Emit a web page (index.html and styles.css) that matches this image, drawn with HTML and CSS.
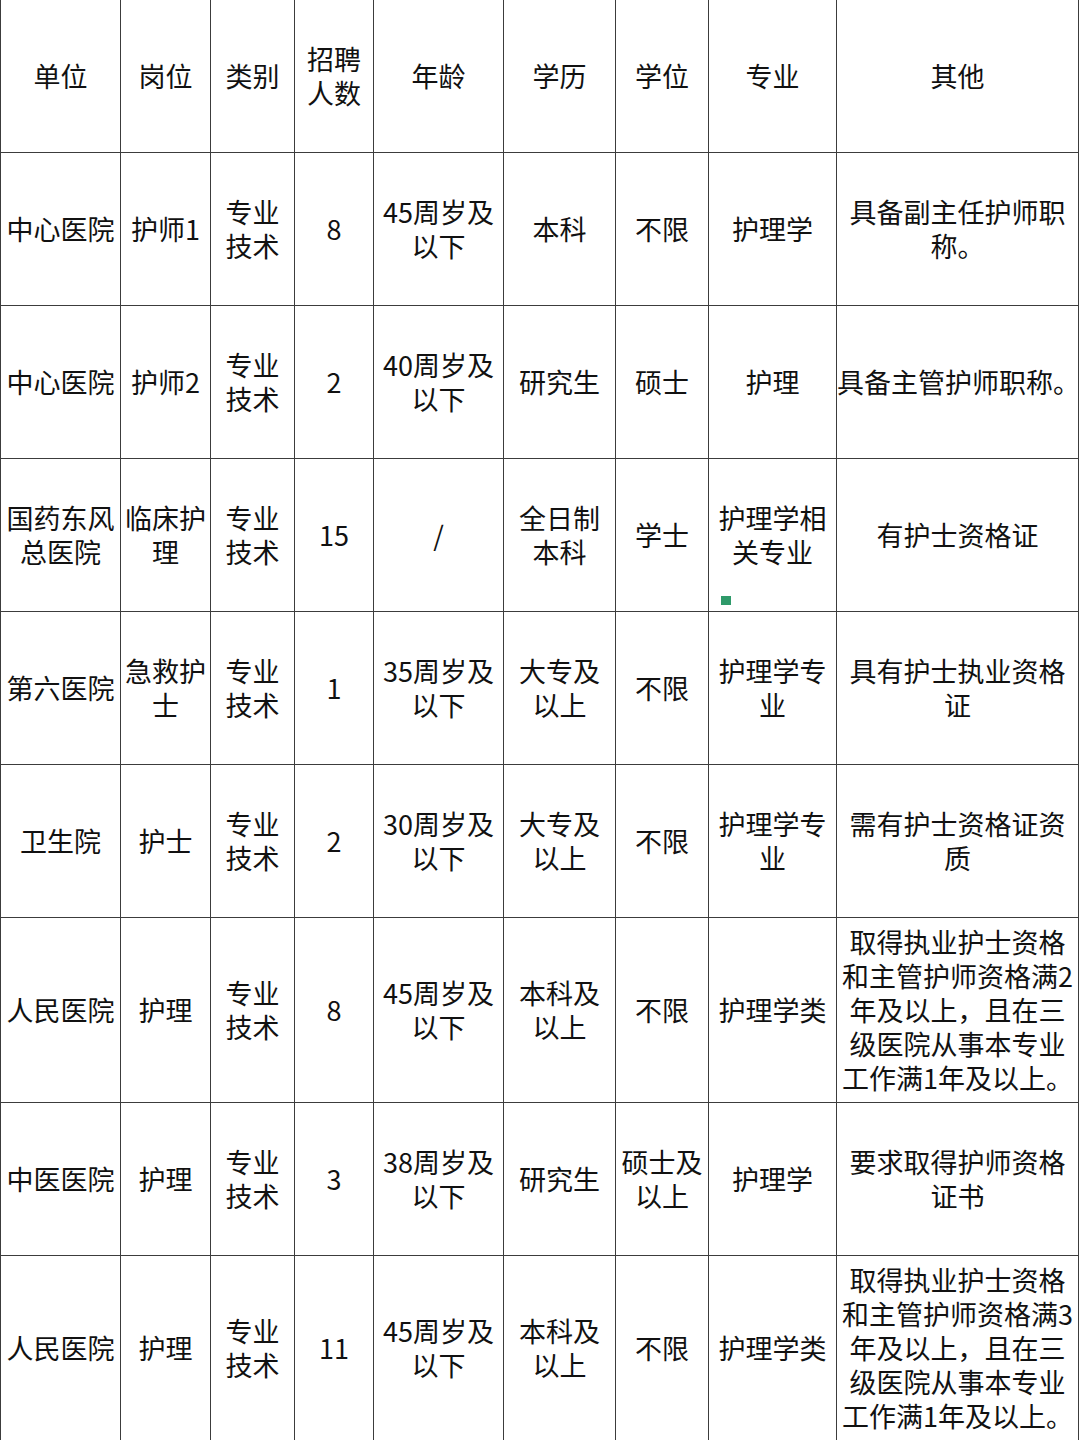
FILE: index.html
```html
<!DOCTYPE html>
<html lang="zh-CN">
<head>
<meta charset="utf-8">
<title>招聘岗位表</title>
<link rel="stylesheet" href="styles.css">
</head>
<body>
<table class="grid">
  <colgroup>
    <col class="c1"><col class="c2"><col class="c3"><col class="c4"><col class="c5"><col class="c6"><col class="c7"><col class="c8"><col class="c9">
  </colgroup>
  <tr class="r-std">
    <td>单位</td><td>岗位</td><td>类别</td><td>招聘<br>人数</td><td>年龄</td><td>学历</td><td>学位</td><td>专业</td><td>其他</td>
  </tr>
  <tr class="r-std">
    <td>中心医院</td><td>护师1</td><td>专业<br>技术</td><td>8</td><td>45周岁及<br>以下</td><td>本科</td><td>不限</td><td>护理学</td><td>具备副主任护师职<br>称。</td>
  </tr>
  <tr class="r-std">
    <td>中心医院</td><td>护师2</td><td>专业<br>技术</td><td>2</td><td>40周岁及<br>以下</td><td>研究生</td><td>硕士</td><td>护理</td><td>具备主管护师职称。</td>
  </tr>
  <tr class="r-std">
    <td>国药东风<br>总医院</td><td>临床护<br>理</td><td>专业<br>技术</td><td>15</td><td>/</td><td>全日制<br>本科</td><td>学士</td><td class="has-mark">护理学相<br>关专业<span class="mark"></span></td><td>有护士资格证</td>
  </tr>
  <tr class="r-std">
    <td>第六医院</td><td>急救护<br>士</td><td>专业<br>技术</td><td>1</td><td>35周岁及<br>以下</td><td>大专及<br>以上</td><td>不限</td><td>护理学专<br>业</td><td>具有护士执业资格<br>证</td>
  </tr>
  <tr class="r-std">
    <td>卫生院</td><td>护士</td><td>专业<br>技术</td><td>2</td><td>30周岁及<br>以下</td><td>大专及<br>以上</td><td>不限</td><td>护理学专<br>业</td><td>需有护士资格证资<br>质</td>
  </tr>
  <tr class="r-tall">
    <td>人民医院</td><td>护理</td><td>专业<br>技术</td><td>8</td><td>45周岁及<br>以下</td><td>本科及<br>以上</td><td>不限</td><td>护理学类</td><td>取得执业护士资格<br>和主管护师资格满2<br>年及以上，且在三<br>级医院从事本专业<br>工作满1年及以上。</td>
  </tr>
  <tr class="r-std">
    <td>中医医院</td><td>护理</td><td>专业<br>技术</td><td>3</td><td>38周岁及<br>以下</td><td>研究生</td><td>硕士及<br>以上</td><td>护理学</td><td>要求取得护师资格<br>证书</td>
  </tr>
  <tr class="r-tall">
    <td>人民医院</td><td>护理</td><td>专业<br>技术</td><td>11</td><td>45周岁及<br>以下</td><td>本科及<br>以上</td><td>不限</td><td>护理学类</td><td>取得执业护士资格<br>和主管护师资格满3<br>年及以上，且在三<br>级医院从事本专业<br>工作满1年及以上。</td>
  </tr>
</table>
</body>
</html>
```

FILE: styles.css
```css
html, body {
  margin: 0;
  padding: 0;
  background: #ffffff;
}

body {
  font-family: "Noto Sans CJK SC", "Noto Sans", sans-serif;
  color: #111111;
  overflow: hidden;
}

.grid {
  border-collapse: collapse;
  table-layout: fixed;
  width: 1079px;
  margin-top: -1px;
}

.c1 { width: 120px; }
.c2 { width: 90px; }
.c3 { width: 84px; }
.c4 { width: 79px; }
.c5 { width: 130px; }
.c6 { width: 112px; }
.c7 { width: 93px; }
.c8 { width: 128px; }
.c9 { width: 242px; }

.grid td {
  border: 1.5px solid #3c3c3c;
  padding: 0;
  text-align: center;
  vertical-align: middle;
  font-size: 27px;
  line-height: 34px;
  white-space: nowrap;
  overflow: visible;
}

.r-std { height: 153px; }
.r-tall { height: 185px; }

.has-mark {
  position: relative;
}

.mark {
  position: absolute;
  left: 12px;
  bottom: 6px;
  width: 10px;
  height: 9px;
  background: #2f9a6a;
}
```
